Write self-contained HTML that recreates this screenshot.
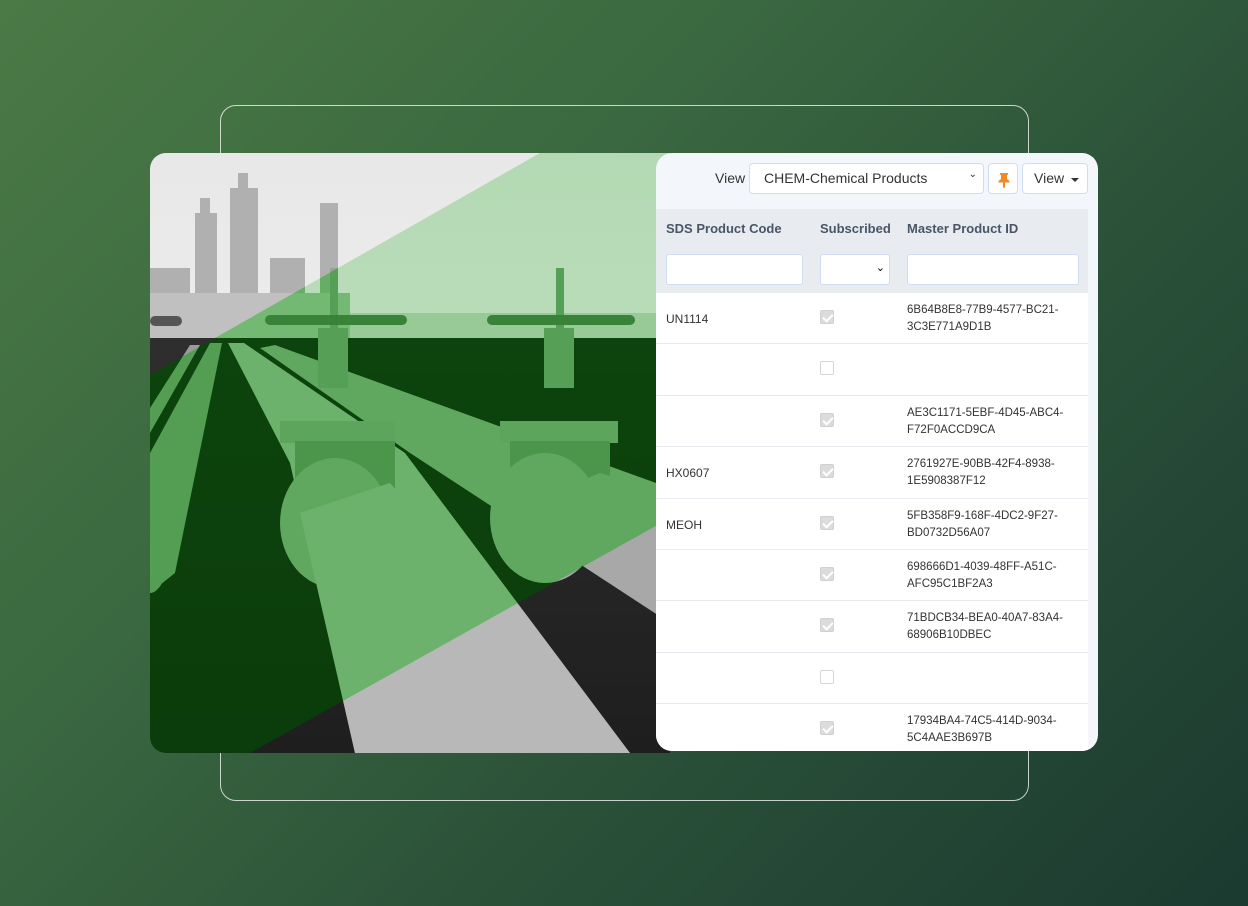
<!DOCTYPE html>
<html><head><meta charset="utf-8"><style>
*{box-sizing:border-box;margin:0;padding:0}
body{width:1248px;height:906px;overflow:hidden;font-family:"Liberation Sans",sans-serif;background:linear-gradient(135deg,#4b7a46 0%,#3a6840 35%,#2a5038 65%,#1b3a30 100%);position:relative}
.outline{position:absolute;left:220px;top:105px;width:809px;height:696px;border:1px solid rgba(255,255,255,.75);border-radius:16px}
.img{position:absolute;left:150px;top:153px;width:520px;height:600px;border-radius:16px 0 0 16px;overflow:hidden}
.panel{position:absolute;left:656px;top:153px;width:442px;height:598px;background:#f3f6fb;border-radius:16px;overflow:hidden}
.top{height:56px;position:relative}
.lbl{position:absolute;left:59px;top:17px;font-size:14px;color:#333}
.sel{position:absolute;left:93px;top:10px;width:235px;height:31px;background:#fff;border:1px solid #cfdcf2;border-radius:4px;font-size:14px;color:#333;padding:6px 14px;white-space:nowrap}
.sel span.c{position:absolute;right:6px;top:5px;font-size:10px}
.pin{position:absolute;left:332px;top:10px;width:30px;height:31px;background:#fff;border:1px solid #cfdcf2;border-radius:4px}
.vbtn{position:absolute;left:366px;top:10px;width:66px;height:31px;background:#fff;border:1px solid #cfdcf2;border-radius:4px;font-size:14px;color:#333;padding:6px 0 0 11px;white-space:nowrap}
.vbtn i{position:absolute;left:48px;top:14px;border-left:4px solid transparent;border-right:4px solid transparent;border-top:4px solid #333}
.hdr{position:absolute;left:0;top:56px;width:432px;height:84px;background:#e8ecf1}
.h{position:absolute;top:12px;font-size:13px;font-weight:bold;color:#4a5566}
.inp{position:absolute;top:45px;height:31px;background:#fff;border:1px solid #cfdcf2;border-radius:3px}
.rows{position:absolute;left:0;top:140px;width:432px;background:#fff}
.r{height:51.4px;border-bottom:1px solid #e6e9ee;position:relative;font-size:12px;color:#333}
.r .a{position:absolute;left:10px;top:19px}
.r .b{position:absolute;left:164px;top:17px;width:14px;height:14px;border:1px solid #d6d6d6;border-radius:2px;background:#fff}
.r .b.on{background:#dcdcdc;border-color:#d0d0d0}
.r .b.on:after{content:"";position:absolute;left:4px;top:1px;width:4px;height:8px;border:solid #fff;border-width:0 2px 2px 0;transform:rotate(45deg)}
.r .c{position:absolute;left:251px;top:9px;line-height:17px;font-size:11.5px}
</style></head><body>
<div class="outline"></div>
<div class="img">
<svg width="520" height="600" viewBox="0 0 520 600">
<defs>
<linearGradient id="sky" x1="0" y1="0" x2="0" y2="1"><stop offset="0" stop-color="#e8e8e8"/><stop offset="1" stop-color="#f4f4f4"/></linearGradient>
<linearGradient id="gr" x1="0" y1="0" x2="0" y2="1"><stop offset="0" stop-color="#2e2e2e"/><stop offset="1" stop-color="#1e1e1e"/></linearGradient>
<filter id="g" color-interpolation-filters="sRGB">
<feColorMatrix type="saturate" values="0"/>
<feComponentTransfer><feFuncR type="table" tableValues="0.03 0.06 0.25 0.45 0.85"/><feFuncG type="table" tableValues="0.18 0.3 0.55 0.72 0.93"/><feFuncB type="table" tableValues="0.03 0.06 0.25 0.45 0.85"/></feComponentTransfer>
</filter>
<clipPath id="band"><polygon points="390,0 520,0 520,365 100,600 0,600 0,222"/></clipPath>
<g id="scene">
<rect width="520" height="600" fill="url(#sky)"/>
<g fill="#b0b0b0">
<rect x="45" y="60" width="22" height="125"/><rect x="80" y="35" width="28" height="150"/><rect x="170" y="50" width="18" height="135"/><rect x="120" y="105" width="35" height="80"/><rect x="0" y="115" width="40" height="70"/><rect x="0" y="140" width="200" height="45" fill="#c0c0c0"/>
<rect x="50" y="45" width="10" height="20"/><rect x="88" y="20" width="10" height="20"/>
</g>
<rect x="200" y="160" width="320" height="28" fill="#d6d6d6"/>
<rect y="185" width="520" height="415" fill="url(#gr)"/>
<g fill="#9a9a9a">
<polygon points="60,190 72,190 25,420 0,440 0,300"/>
<polygon points="40,192 50,192 0,280 0,255"/>
</g>
<polygon points="110,195 125,192 520,335 520,470 260,300" fill="#a8a8a8"/>
<polygon points="78,190 94,190 255,300 480,600 205,600 140,310" fill="#b8b8b8"/>
<g fill="#9c9c9c">
<rect x="180" y="115" width="8" height="120"/><rect x="406" y="115" width="8" height="120"/>
<rect x="115" y="162" width="142" height="10" rx="5" fill="#777"/><rect x="337" y="162" width="148" height="10" rx="5" fill="#777"/>
<rect x="168" y="175" width="30" height="60"/><rect x="394" y="175" width="30" height="60"/>
<rect x="130" y="268" width="115" height="22" fill="#a5a5a5"/><rect x="350" y="268" width="118" height="22" fill="#a5a5a5"/>
<rect x="145" y="288" width="100" height="50" fill="#8e8e8e"/><rect x="360" y="288" width="100" height="50" fill="#8e8e8e"/>
</g>
<ellipse cx="185" cy="370" rx="55" ry="65" fill="#a9a9a9"/>
<ellipse cx="395" cy="365" rx="55" ry="65" fill="#a9a9a9"/>
<ellipse cx="0" cy="380" rx="22" ry="60" fill="#9a9a9a"/>
<polygon points="150,360 240,330 480,600 205,600" fill="#b8b8b8"/>
<polygon points="390,345 450,320 520,340 520,470" fill="#a8a8a8"/>
<rect x="0" y="163" width="32" height="10" rx="5" fill="#555"/>
</g>
</defs>
<use href="#scene"/>
<use href="#scene" clip-path="url(#band)" filter="url(#g)"/>
</svg>
</div>
<div class="panel">
<div class="top">
<div class="lbl">View</div>
<div class="sel">CHEM-Chemical Products<span class="c">&#8964;</span></div>
<div class="pin"><svg width="30" height="31" viewBox="0 0 30 31"><path d="M11 9h8v1.5l-1 .5v4l2.5 2v1.5h-4.5v4.5l-1 1.5-1-1.5v-4.5h-4.5v-1.5l2.5-2v-4l-1-.5z" fill="#f08a24"/></svg></div>
<div class="vbtn">View<i></i></div>
</div>
<div class="hdr">
<div class="h" style="left:10px">SDS Product Code</div>
<div class="h" style="left:164px">Subscribed</div>
<div class="h" style="left:251px">Master Product ID</div>
<div class="inp" style="left:10px;width:137px"></div>
<div class="inp" style="left:164px;width:70px"><span style="position:absolute;right:4px;top:6px;font-size:11px">&#8964;</span></div>
<div class="inp" style="left:251px;width:172px"></div>
</div>
<div class="rows">
<div class="r"><span class="a">UN1114</span><span class="b on"></span><span class="c">6B64B8E8-77B9-4577-BC21-<br>3C3E771A9D1B</span></div>
<div class="r"><span class="b"></span></div>
<div class="r"><span class="b on"></span><span class="c">AE3C1171-5EBF-4D45-ABC4-<br>F72F0ACCD9CA</span></div>
<div class="r"><span class="a">HX0607</span><span class="b on"></span><span class="c">2761927E-90BB-42F4-8938-<br>1E5908387F12</span></div>
<div class="r"><span class="a">MEOH</span><span class="b on"></span><span class="c">5FB358F9-168F-4DC2-9F27-<br>BD0732D56A07</span></div>
<div class="r"><span class="b on"></span><span class="c">698666D1-4039-48FF-A51C-<br>AFC95C1BF2A3</span></div>
<div class="r"><span class="b on"></span><span class="c">71BDCB34-BEA0-40A7-83A4-<br>68906B10DBEC</span></div>
<div class="r"><span class="b"></span></div>
<div class="r"><span class="b on"></span><span class="c">17934BA4-74C5-414D-9034-<br>5C4AAE3B697B</span></div>
</div>
</div>
</body></html>
